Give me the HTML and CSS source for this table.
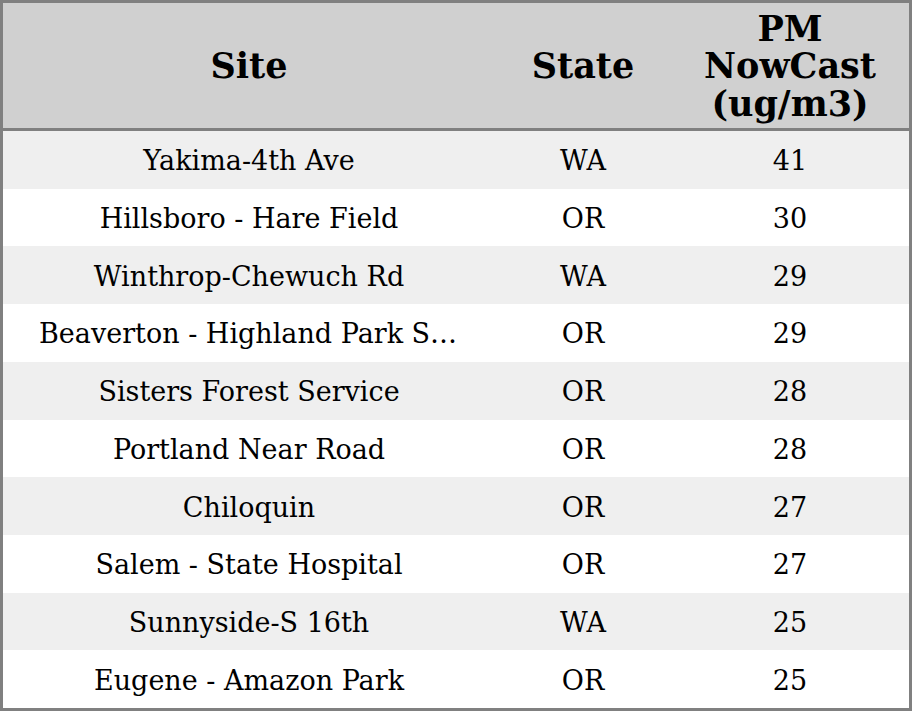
FILE: index.html
```html
<!DOCTYPE html>
<html>
<head>
<meta charset="utf-8">
<link rel="stylesheet" href="styles.css">
</head>
<body>
<div class="table">
  <div class="row head">
    <div class="cell">Site</div>
    <div class="cell">State</div>
    <div class="cell">PM<br>NowCast<br>(ug/m3)</div>
  </div>
  <div class="body">
    <div class="row odd"><div class="cell site">Yakima-4th Ave</div><div class="cell">WA</div><div class="cell">41</div></div>
    <div class="row"><div class="cell site">Hillsboro - Hare Field</div><div class="cell">OR</div><div class="cell">30</div></div>
    <div class="row odd"><div class="cell site">Winthrop-Chewuch Rd</div><div class="cell">WA</div><div class="cell">29</div></div>
    <div class="row"><div class="cell site">Beaverton - Highland Park School</div><div class="cell">OR</div><div class="cell">29</div></div>
    <div class="row odd"><div class="cell site">Sisters Forest Service</div><div class="cell">OR</div><div class="cell">28</div></div>
    <div class="row"><div class="cell site">Portland Near Road</div><div class="cell">OR</div><div class="cell">28</div></div>
    <div class="row odd"><div class="cell site">Chiloquin</div><div class="cell">OR</div><div class="cell">27</div></div>
    <div class="row"><div class="cell site">Salem - State Hospital</div><div class="cell">OR</div><div class="cell">27</div></div>
    <div class="row odd"><div class="cell site">Sunnyside-S 16th</div><div class="cell">WA</div><div class="cell">25</div></div>
    <div class="row"><div class="cell site">Eugene - Amazon Park</div><div class="cell">OR</div><div class="cell">25</div></div>
  </div>
</div>
</body>
</html>
```
FILE: styles.css
```css
html, body {
  margin: 0;
  padding: 0;
  background: #ffffff;
}
.table {
  box-sizing: border-box;
  width: 912px;
  height: 711px;
  border: 3px solid #808080;
  display: grid;
  grid-template-rows: 128px 1fr;
  font-family: "DejaVu Serif", serif;
  color: #000;
}
.row {
  display: grid;
  grid-template-columns: 492px 176px 1fr;
  background: #ffffff;
}
.row.odd {
  background: #efefef;
}
.head {
  background: #d0d0d0;
  border-bottom: 3px solid #808080;
  font-weight: bold;
  font-size: 35px;
  line-height: 37.5px;
  padding-top: 1px;
}
.body {
  display: grid;
  grid-template-rows: repeat(10, 1fr);
  font-size: 27px;
}
.cell {
  display: flex;
  align-items: center;
  justify-content: center;
  text-align: center;
  padding: 0 36px;
  min-width: 0;
}
.body .cell {
  display: block;
  align-self: center;
  white-space: nowrap;
  overflow: hidden;
  text-overflow: ellipsis;
  line-height: 32px;
  padding-top: 3px;
}
```
